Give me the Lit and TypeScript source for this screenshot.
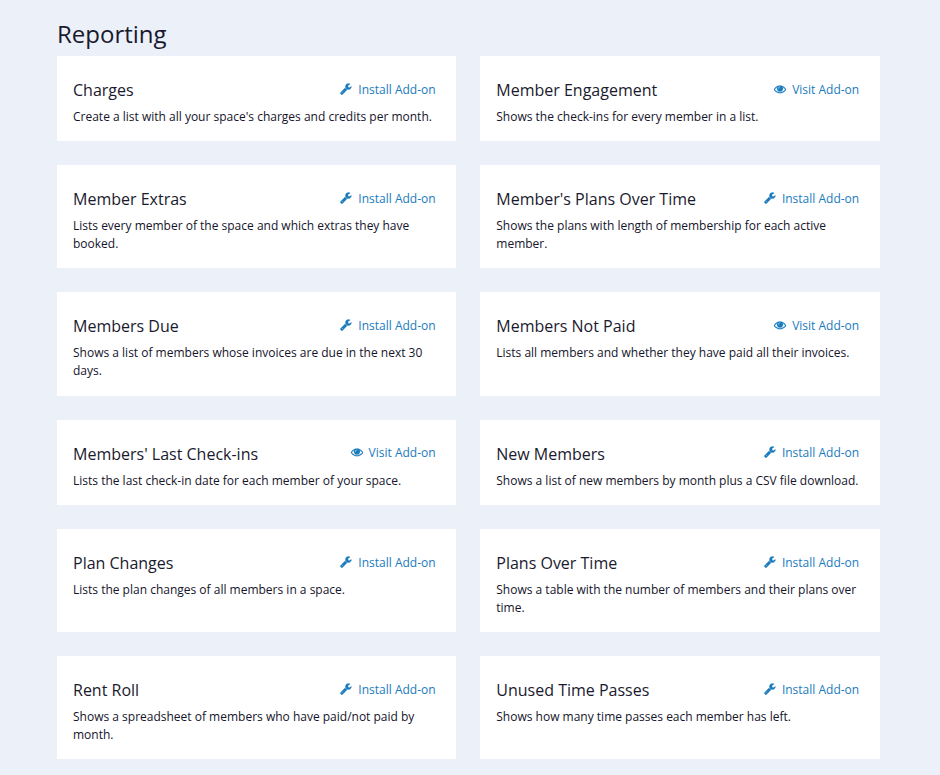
import { LitElement, html, css, svg } from "lit";
import { customElement, property } from "lit/decorators.js";

type Addon = { name: string; text: string; installed?: boolean };

const ADDONS: Addon[] = [
  { name: "Charges", text: "Create a list with all your space's charges and credits per month." },
  { name: "Member Engagement", text: "Shows the check-ins for every member in a list.", installed: true },
  { name: "Member Extras", text: "Lists every member of the space and which extras they have booked." },
  { name: "Member's Plans Over Time", text: "Shows the plans with length of membership for each active member." },
  { name: "Members Due", text: "Shows a list of members whose invoices are due in the next 30 days." },
  { name: "Members Not Paid", text: "Lists all members and whether they have paid all their invoices.", installed: true },
  { name: "Members' Last Check-ins", text: "Lists the last check-in date for each member of your space.", installed: true },
  { name: "New Members", text: "Shows a list of new members by month plus a CSV file download." },
  { name: "Plan Changes", text: "Lists the plan changes of all members in a space." },
  { name: "Plans Over Time", text: "Shows a table with the number of members and their plans over time." },
  { name: "Rent Roll", text: "Shows a spreadsheet of members who have paid/not paid by month." },
  { name: "Unused Time Passes", text: "Shows how many time passes each member has left." },
];

const wrench = svg`<path d="M448 1472q0-26-19-45t-45-19-45 19-19 45 19 45 45 19 45-19 19-45zm644-420l-682 682q-37 37-90 37-52 0-91-37l-106-108q-38-36-38-90 0-53 38-91l681-681q39 98 114.500 173.500t173.500 114.500zm634-435q0 39-23 106-47 134-164.500 217.500t-258.500 83.500q-185 0-316.500-131.500t-131.500-316.500 131.500-316.500 316.500-131.500q58 0 121.500 16.500t107.500 46.500q16 11 16 28t-16 28l-293 169v224l193 107q5-3 79-48.500t135.500-81 70.500-35.500q15 0 23.500 10t8.500 25z"/>`;
const eye = svg`<path d="M1664 960q-152-236-381-353 61 104 61 225 0 185-131.500 316.500t-316.500 131.500-316.500-131.500-131.500-316.500q0-121 61-225-229 117-381 353 133 205 333.500 326.500t434.500 121.500 434.500-121.500 333.500-326.500zm-720-384q0-20-14-34t-34-14q-125 0-214.500 89.500t-89.500 214.500q0 20 14 34t34 14 34-14 14-34q0-86 61-147t147-61q20 0 34-14t14-34zm848 384q0 34-20 69-140 230-376.500 368.500t-499.500 138.500-499.500-139-376.500-368q-20-35-20-69t20-69q140-229 376.500-368t499.500-139 499.500 139 376.500 368q20 35 20 69z"/>`;

@customElement("addon-card")
export class AddonCard extends LitElement {
  @property({ attribute: false }) addon!: Addon;

  static styles = css`
    :host { display: block; box-sizing: border-box; background: #fff; padding: 24px 16px 15.2px; }
    .head { display: flex; justify-content: space-between; align-items: flex-start; height: 28px; padding-right: 4.8px; }
    h2 { margin: 0; font-size: 16px; line-height: 20px; font-weight: 400; white-space: nowrap; }
    .action { display: flex; align-items: center; gap: 6px; height: 20px; margin-top: -0.2px; color: #1a7bbd; font-size: 12px; line-height: 18px; text-decoration: none; white-space: nowrap; }
    svg { width: 12px; height: 12px; margin-bottom: 2px; fill: currentColor; stroke: currentColor; stroke-width: 40; overflow: visible; }
    p { margin: 0; font-size: 12px; line-height: 18px; color: #14142b; }
  `;

  render() {
    const { name, text, installed } = this.addon;
    return html`
      <div class="head">
        <h2>${name}</h2>
        <a class="action" href="#">
          <svg viewBox=${installed ? "0 0 1792 1792" : "40 60 1760 1760"} aria-hidden="true">${installed ? eye : wrench}</svg>
          <span>${installed ? "Visit" : "Install"} Add-on</span>
        </a>
      </div>
      <p>${text}</p>
    `;
  }
}

@customElement("app-root")
export class AppRoot extends LitElement {
  static styles = css`
    :host { display: block; box-sizing: border-box; min-height: 775px; padding: 16px 60px 15px 57px; background: #ebf0f9; color: #1a1a2e; font-family: "Open Sans", sans-serif; }
    h1 { margin: 0; height: 40px; font-size: 24px; line-height: 36px; font-weight: 400; }
    .grid { display: grid; grid-template-columns: 399.4px 399.7px; gap: 24px 23.9px; }
  `;

  render() {
    return html`
      <h1>Reporting</h1>
      <div class="grid">${ADDONS.map((a) => html`<addon-card .addon=${a}></addon-card>`)}</div>
    `;
  }
}
